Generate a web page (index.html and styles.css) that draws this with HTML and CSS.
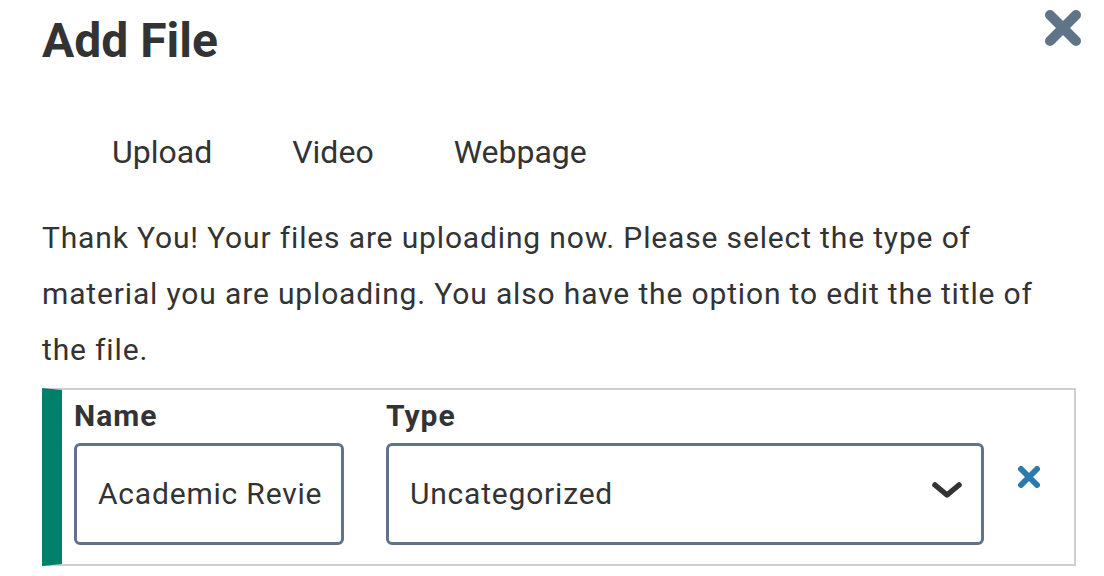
FILE: index.html
```html
<!DOCTYPE html>
<html>
<head>
<meta charset="utf-8">
<link rel="stylesheet" href="styles.css">
</head>
<body>
<div class="modal">
  <div class="header">
    <h1 class="title">Add File</h1>
    <button class="close" aria-label="Close">
      <svg width="38" height="38" viewBox="0 0 38 38"><path d="M6 6 L32 32 M32 6 L6 32" stroke="#5f7489" stroke-width="10" stroke-linecap="round"/></svg>
    </button>
  </div>
  <ul class="tabs">
    <li class="tab">Upload</li>
    <li class="tab">Video</li>
    <li class="tab">Webpage</li>
  </ul>
  <p class="intro">Thank You! Your files are uploading now. Please select the type of material you are uploading. You also have the option to edit the title of the file.</p>
  <div class="file-card">
    <div class="field name-field">
      <label class="label">Name</label>
      <div class="input">Academic Revie</div>
    </div>
    <div class="field type-field">
      <label class="label">Type</label>
      <div class="input select">
        <span>Uncategorized</span>
        <svg class="chevron" width="32" height="18" viewBox="0 0 32 18"><path d="M4 4 L16 14 L28 4" fill="none" stroke="#333" stroke-width="5.5" stroke-linecap="round" stroke-linejoin="round"/></svg>
      </div>
    </div>
    <button class="remove" aria-label="Remove">
      <svg width="24" height="24" viewBox="0 0 24 24"><path d="M4 4 L20 20 M20 4 L4 20" stroke="#2a7aae" stroke-width="6" stroke-linecap="round"/></svg>
    </button>
  </div>
</div>
</body>
</html>
```
FILE: styles.css
```css
* { box-sizing: border-box; }
body {
  margin: 0;
  background: #fff;
  font-family: Roboto, "Liberation Sans", sans-serif;
  color: #333;
}
.modal {
  padding: 12px 22px 0 42px;
}
.header {
  display: flex;
  justify-content: space-between;
  align-items: flex-start;
}
.title {
  margin: 0;
  font-size: 48px;
  font-weight: 700;
  line-height: 57.6px;
}
.close {
  border: 0;
  background: none;
  padding: 0;
  margin-top: -3px;
  width: 38px;
  height: 38px;
  display: flex;
}
.tabs {
  list-style: none;
  margin: 58px 0 0 0;
  padding: 0 0 0 30px;
  display: flex;
}
.tab {
  font-size: 32px;
  line-height: 48px;
  padding: 0 40px;
}
.intro {
  margin: 34px 0 0 0;
  font-size: 30px;
  letter-spacing: 0.85px;
  line-height: 56px;
  padding-right: 30px;
}
.file-card {
  margin-top: 10px;
  margin-right: 6px;
  border: 2px solid #cfcfcf;
  border-left: 20px solid #00806a;
  display: flex;
  align-items: flex-start;
  padding: 8px 0 19px 12px;
}
.field {
  display: flex;
  flex-direction: column;
}
.name-field { width: 270px; }
.type-field { width: 598px; margin-left: 42px; }
.label {
  font-size: 30px;
  font-weight: 700;
  letter-spacing: 1px;
  line-height: 36px;
  margin-bottom: 9px;
}
.input {
  height: 102px;
  border: 3px solid #5f7489;
  border-radius: 6px;
  padding: 0 21px;
  font-size: 30px;
  letter-spacing: 0.8px;
  display: flex;
  align-items: center;
  overflow: hidden;
  white-space: nowrap;
}
.select {
  justify-content: space-between;
  padding-right: 18px;
}
.chevron { margin-top: -8px; }
.remove {
  border: 0;
  background: none;
  padding: 0;
  margin: 67px 0 0 33px;
  display: flex;
}
```
